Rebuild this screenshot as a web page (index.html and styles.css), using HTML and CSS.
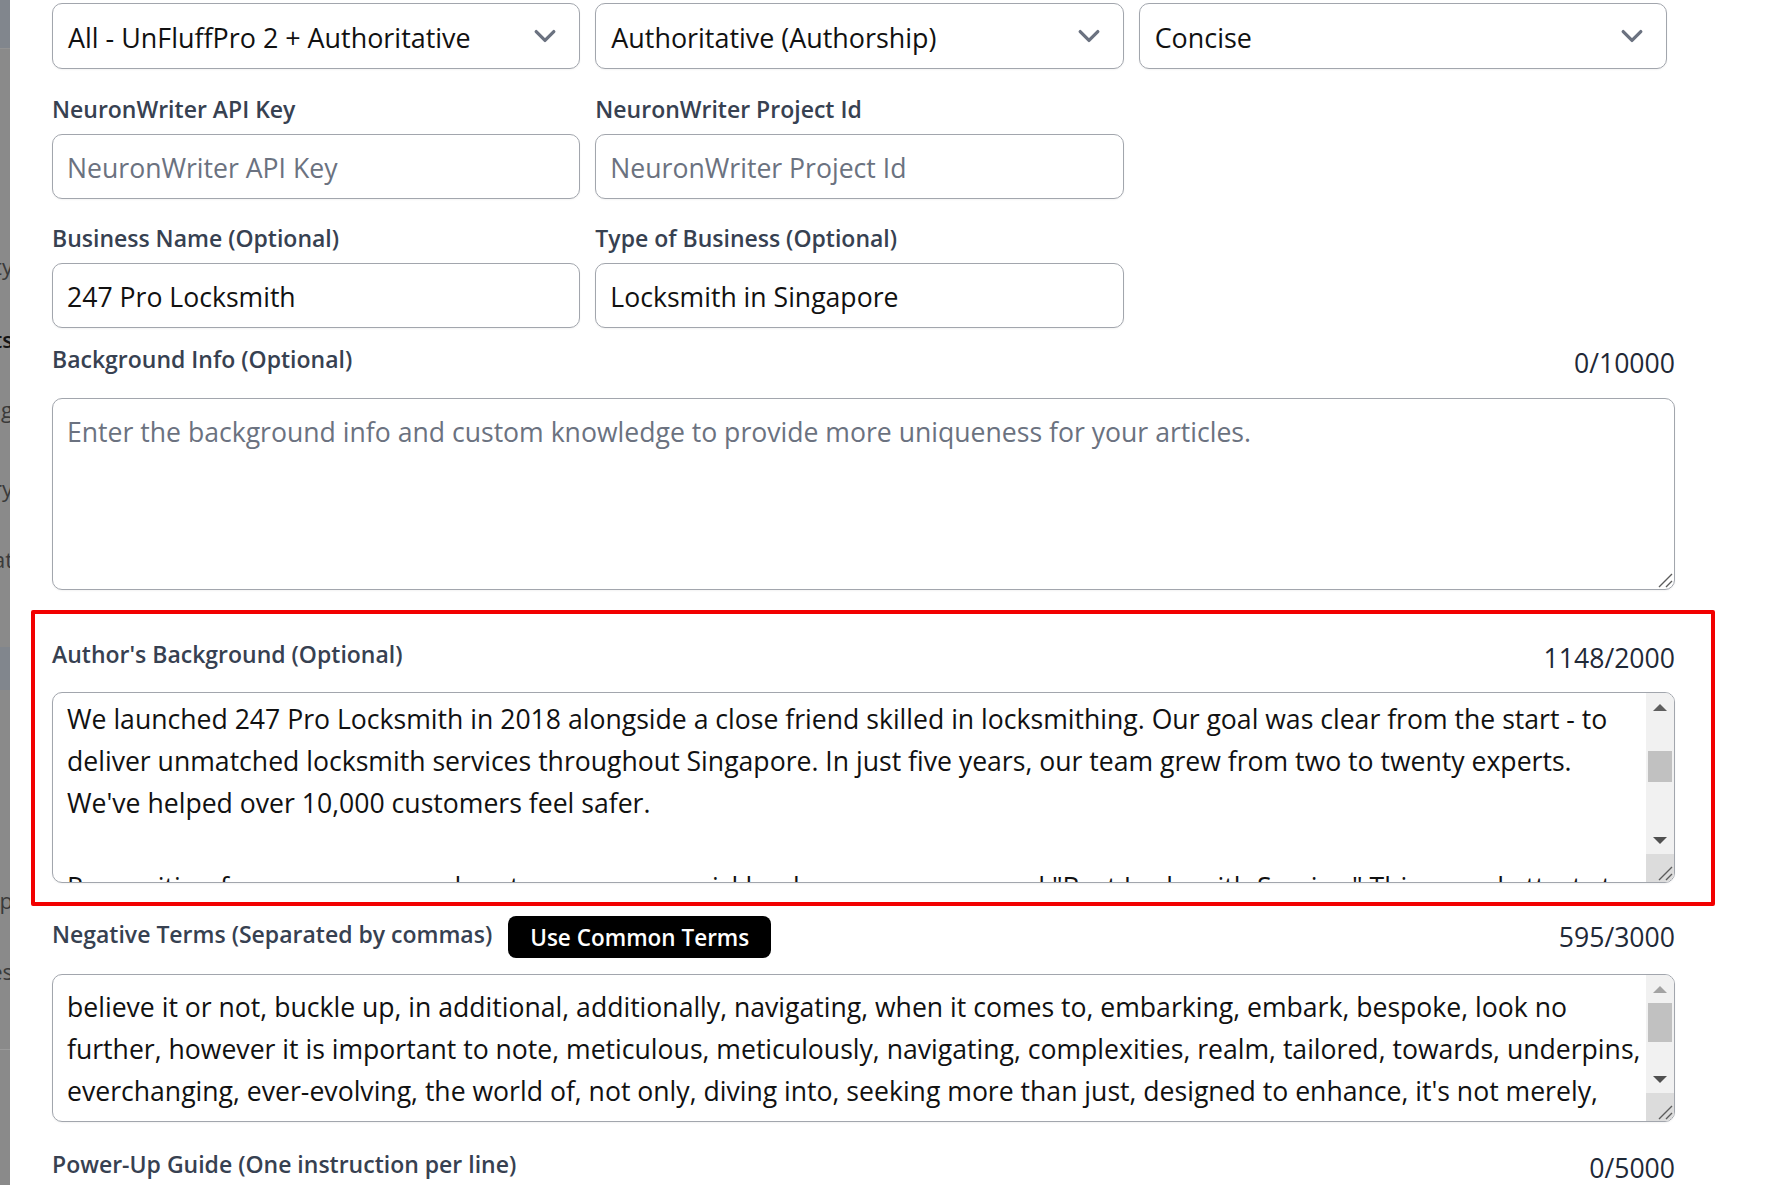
FILE: index.html
```html
<!DOCTYPE html>
<html lang="en">
<head>
<meta charset="utf-8">
<title>Article settings</title>
<link rel="stylesheet" href="styles.css">
</head>
<body>
<div class="app">
  <aside class="sidebar">
    <div class="sb-topband"></div>
    <div class="nav-item n1"><span>Quality</span></div>
    <div class="nav-item n2 active"><span>Prompts</span></div>
    <div class="nav-item n3"><span>Writing</span></div>
    <div class="nav-item n4"><span>History</span></div>
    <div class="nav-item n5"><span>Format</span></div>
    <div class="nav-band"></div>
    <div class="nav-item n6"><span>Scrip</span></div>
    <div class="nav-item n7"><span>Rules</span></div>
    <div class="nav-line"></div>
  </aside>

  <main class="form">
    <div class="grid3 selects">
      <div class="select"><span>All - UnFluffPro 2 + Authoritative</span><svg class="chev" viewBox="0 0 20 20" width="44" height="44"><path d="M6 8l4 4 4-4" /></svg></div>
      <div class="select"><span>Authoritative (Authorship)</span><svg class="chev" viewBox="0 0 20 20" width="44" height="44"><path d="M6 8l4 4 4-4" /></svg></div>
      <div class="select"><span>Concise</span><svg class="chev" viewBox="0 0 20 20" width="44" height="44"><path d="M6 8l4 4 4-4" /></svg></div>
    </div>

    <div class="grid3 group g1">
      <div class="field"><label class="lbl">NeuronWriter API Key</label><input class="input" type="text" placeholder="NeuronWriter API Key"></div>
      <div class="field"><label class="lbl">NeuronWriter Project Id</label><input class="input" type="text" placeholder="NeuronWriter Project Id"></div>
    </div>

    <div class="grid3 group g2">
      <div class="field"><label class="lbl">Business Name (Optional)</label><input class="input" type="text" value="247 Pro Locksmith"></div>
      <div class="field"><label class="lbl">Type of Business (Optional)</label><input class="input" type="text" value="Locksmith in Singapore"></div>
    </div>

    <div class="row-head h-bg">
      <label class="lbl">Background Info (Optional)</label>
      <span class="count">0/10000</span>
    </div>
    <div class="ta-wrap">
      <textarea class="ta" placeholder="Enter the background info and custom knowledge to provide more uniqueness for your articles."></textarea>
      <svg class="grip" viewBox="0 0 16 16" width="16" height="16"><path d="M2 15L15 2M9 15L15 9" /></svg>
    </div>

    <section class="highlight">
      <div class="row-head">
        <label class="lbl">Author's Background (Optional)</label>
        <span class="count">1148/2000</span>
      </div>
      <div class="fake-ta ta-author">
        <div class="ta-text t-author">
          <div>We launched 247 Pro Locksmith in 2018 alongside a close friend skilled in locksmithing. Our goal was clear from the start - to</div>
          <div>deliver unmatched locksmith services throughout Singapore. In just five years, our team grew from two to twenty experts.</div>
          <div>We've helped over 10,000 customers feel safer.</div>
          <div>&nbsp;</div>
          <div>Recognition from our peers and customers came quickly when we were named "Best Locksmith Service." This award attests to our</div>
        </div>
        <div class="sbar">
          <div class="sb-btn"><i class="tri up"></i></div>
          <div class="sb-track"><div class="thumb thumb-author"></div></div>
          <div class="sb-btn"><i class="tri down"></i></div>
          <div class="sb-corner"><svg class="grip-c" viewBox="0 0 16 16" width="16" height="16"><path d="M2 15L15 2M9 15L15 9" /></svg></div>
        </div>
      </div>
    </section>

    <div class="row-head h-neg">
      <div class="lbl-group">
        <label class="lbl">Negative Terms (Separated by commas)</label>
        <button class="btn" type="button">Use Common Terms</button>
      </div>
      <span class="count">595/3000</span>
    </div>
    <div class="fake-ta ta-neg">
      <div class="ta-text t-neg">
        <div>believe it or not, buckle up, in additional, additionally, navigating, when it comes to, embarking, embark, bespoke, look no</div>
        <div>further, however it is important to note, meticulous, meticulously, navigating, complexities, realm, tailored, towards, underpins,</div>
        <div>everchanging, ever-evolving, the world of, not only, diving into, seeking more than just, designed to enhance, it's not merely,</div>
        <div>unlock the secrets, unveil the secrets, robust, delve, in today's digital age, a testament to</div>
      </div>
      <div class="sbar">
        <div class="sb-btn"><i class="tri up dim"></i></div>
        <div class="sb-track"><div class="thumb thumb-neg"></div></div>
        <div class="sb-btn"><i class="tri down"></i></div>
        <div class="sb-corner"><svg class="grip-c" viewBox="0 0 16 16" width="16" height="16"><path d="M2 15L15 2M9 15L15 9" /></svg></div>
      </div>
    </div>

    <div class="row-head h-power">
      <label class="lbl">Power-Up Guide (One instruction per line)</label>
      <span class="count">0/5000</span>
    </div>
  </main>
</div>
</body>
</html>
```
FILE: styles.css
```css
html, body {
  margin: 0;
  padding: 0;
  height: 100%;
  overflow: hidden;
  background: #ffffff;
}

body {
  font-family: "Open Sans", "Noto Sans", sans-serif;
  color: #111111;
}

.app {
  display: flex;
  height: 1185px;
}

/* dimmed sidebar peeking at the left edge */
.sidebar {
  width: 10px;
  flex: none;
  background: #8a8a8a;
  overflow: hidden;
  display: flex;
  flex-direction: column;
  font-size: 22px;
  line-height: 30px;
  color: #3a3a3a;
}

.sb-topband {
  height: 48px;
  background: #81868d;
  border-bottom: 1px solid #939393;
  flex: none;
}

.nav-item {
  height: 30px;
  display: flex;
  justify-content: flex-end;
  white-space: nowrap;
  flex: none;
}

.nav-item span {
  margin-right: -3px;
}

.nav-item.active {
  color: #151515;
  font-weight: 600;
}

.n1 { margin-top: 202px; }
.n2 { margin-top: 43px; }
.n3 { margin-top: 40px; }
.n4 { margin-top: 49px; }
.n5 { margin-top: 41px; }

.nav-band {
  margin-top: 73px;
  height: 43px;
  background: #81868d;
  flex: none;
}

.n6 { margin-top: 195px; }
.n7 { margin-top: 41px; }

.nav-line {
  margin-top: 63px;
  height: 1px;
  background: #9b9b9b;
  flex: none;
}

/* main form column */
.form {
  flex: 1;
  min-width: 0;
  padding: 3px 102px 0 42px;
}

.grid3 {
  display: grid;
  grid-template-columns: repeat(3, 1fr);
  column-gap: 15px;
  margin-right: 8px;
}

.select {
  height: 66px;
  box-sizing: border-box;
  border: 1px solid #a2a6ad;
  border-radius: 10px;
  background: #fff;
  box-shadow: 0 1px 2px rgba(0, 0, 0, 0.05);
  display: flex;
  align-items: center;
  justify-content: space-between;
  padding: 3px 12px 0 15px;
  font-size: 26.9px;
  color: #111;
}

.chev {
  flex: none;
  margin-top: -3px;
  fill: none;
  stroke: #6b7280;
  stroke-width: 1.5;
  stroke-linecap: round;
  stroke-linejoin: round;
}

.g1 { margin-top: 23px; }
.g2 { margin-top: 22px; }

.field {
  display: flex;
  flex-direction: column;
}

.lbl {
  display: block;
  font-size: 23px;
  line-height: 35px;
  font-weight: 600;
  color: #374151;
  white-space: nowrap;
}

.field .lbl {
  margin-bottom: 7px;
}

.input {
  display: block;
  height: 65px;
  box-sizing: border-box;
  width: 100%;
  border: 1px solid #a2a6ad;
  border-radius: 10px;
  background: #fff;
  box-shadow: 0 1px 2px rgba(0, 0, 0, 0.05);
  padding: 2px 14px 0;
  font-family: inherit;
  font-size: 26.6px;
  color: #111;
  outline: none;
}

.input::placeholder {
  color: #6b7280;
}

.row-head {
  display: flex;
  justify-content: space-between;
  align-items: center;
}

.count {
  font-size: 26.6px;
  line-height: 35px;
  color: #1f2937;
  margin-top: 8px;
}

.h-bg {
  margin-top: 10px;
}

.ta-wrap {
  position: relative;
  margin-top: 17px;
}

.ta {
  display: block;
  width: 100%;
  height: 192px;
  box-sizing: border-box;
  border: 1px solid #a2a6ad;
  border-radius: 10px;
  box-shadow: 0 1px 2px rgba(0, 0, 0, 0.05);
  padding: 12px 14px;
  font-family: inherit;
  font-size: 26.6px;
  line-height: 42px;
  color: #111;
  resize: none;
  outline: none;
}

.ta::placeholder {
  color: #6b7280;
}

.grip {
  position: absolute;
  right: 2px;
  bottom: 2px;
  fill: none;
  stroke: #5c5c5c;
  stroke-width: 1.4;
}

/* highlighted (annotated) block */
.highlight {
  margin: 20px -40px 0 -21px;
  border: 4px solid #f20000;
  border-radius: 2px;
  padding: 19px 36px 19px 17px;
}

/* text areas with a classic scrollbar */
.fake-ta {
  display: flex;
  box-sizing: border-box;
  border: 1px solid #a2a6ad;
  border-radius: 10px;
  overflow: hidden;
  background: #fff;
  box-shadow: 0 1px 2px rgba(0, 0, 0, 0.05);
}

.ta-author {
  margin-top: 16px;
  height: 191px;
}

.ta-neg {
  margin-top: 16px;
  height: 148px;
}

.ta-text {
  flex: 1;
  min-width: 0;
  overflow: hidden;
  white-space: nowrap;
  padding: 0 14px;
  font-size: 26.6px;
  line-height: 42px;
  color: #111;
}

.t-author { padding-top: 5px; }
.t-neg { padding-top: 11px; }

.sbar {
  width: 28px;
  flex: none;
  background: #f1f1f1;
  display: flex;
  flex-direction: column;
}

.sb-btn {
  height: 28px;
  flex: none;
  display: flex;
  align-items: center;
  justify-content: center;
}

.tri {
  display: block;
  width: 0;
  height: 0;
  border-left: 7px solid transparent;
  border-right: 7px solid transparent;
}

.tri.up {
  border-bottom: 7px solid #5f5f5f;
}

.tri.up.dim {
  border-bottom-color: #a3a3a3;
}

.tri.down {
  border-top: 7px solid #505050;
}

.sb-track {
  flex: 1;
  display: flex;
  flex-direction: column;
}

.thumb {
  margin: 0 2px;
  background: #c1c1c1;
}

.thumb-author {
  margin-top: 30px;
  height: 31px;
}

.thumb-neg {
  margin-top: 0;
  height: 39px;
}

.sb-corner {
  height: 28px;
  flex: none;
  background: #dcdcdc;
  display: flex;
  align-items: flex-end;
  justify-content: flex-end;
}

.grip-c {
  fill: none;
  stroke: #5c5c5c;
  stroke-width: 1.4;
  margin: 0 1px 1px 0;
}

.h-neg {
  margin-top: 10px;
  height: 42px;
}

.h-neg .count {
  margin-top: 0;
}

.lbl-group {
  display: flex;
  align-items: center;
  gap: 16px;
}

.lbl-group .lbl {
  margin-top: -6px;
}

.btn {
  height: 42px;
  padding: 0 22px;
  border: none;
  border-radius: 8px;
  background: #000;
  color: #fff;
  font-family: inherit;
  font-size: 22.5px;
  font-weight: 600;
  cursor: pointer;
}

.h-power {
  margin-top: 21px;
}
```
